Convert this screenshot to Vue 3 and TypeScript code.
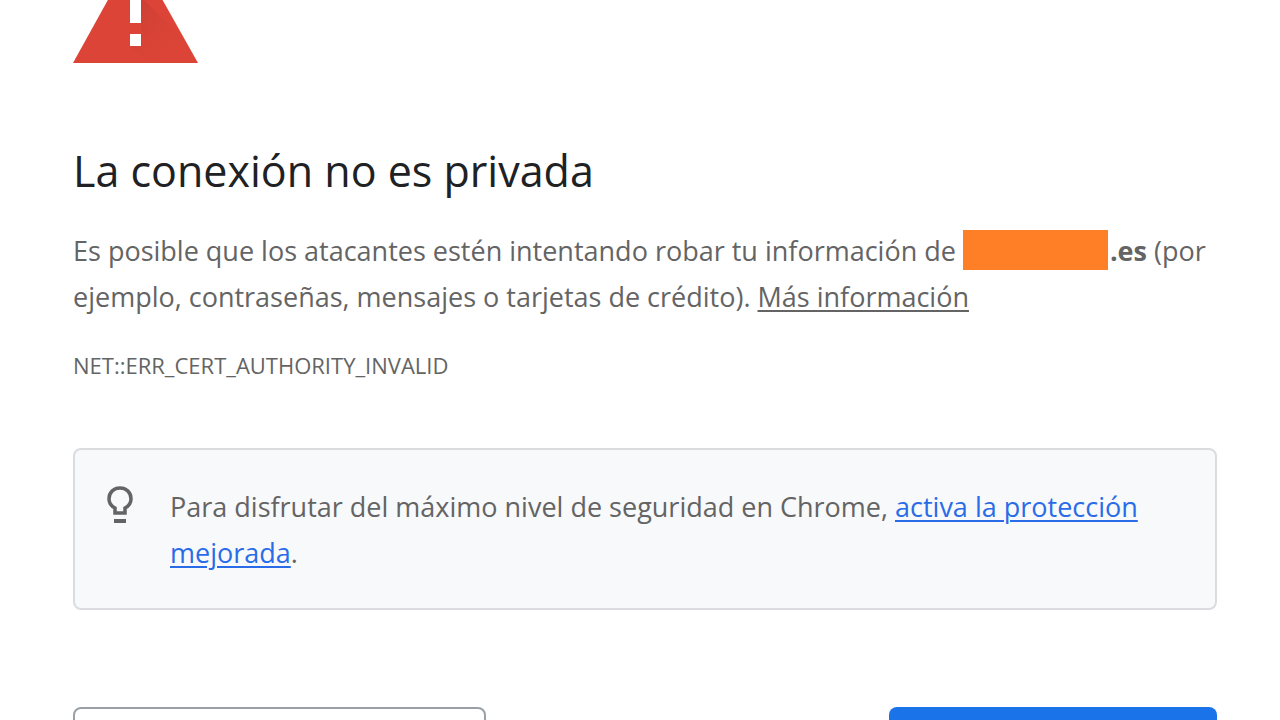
<script setup lang="ts">
const errorCode: string = 'NET::ERR_CERT_AUTHORITY_INVALID'
</script>

<template>
  <main class="page">
    <svg class="warning" viewBox="0 0 126 112" aria-hidden="true">
      <defs>
        <linearGradient id="shade" x1="0" y1="0" x2="1" y2="1">
          <stop offset="0" stop-color="#b93a30" stop-opacity=".6" />
          <stop offset="0.8" stop-color="#db4437" stop-opacity="0" />
        </linearGradient>
      </defs>
      <path d="M62 0L125 112H0Z" fill="#db4437" />
      <path d="M68 46L106 84L121 112H74L57 95L68 84Z" fill="url(#shade)" />
      <path d="M57 46H68V72H57ZM57 83H68V95H57Z" fill="#fff" />
    </svg>
    <h1>La conexión no es privada</h1>
    <p class="message">
      Es posible que los atacantes estén intentando robar tu información de
      <span class="redaction"></span><strong>.es</strong> (por ejemplo, contraseñas, mensajes o tarjetas de crédito).
      <a href="#info">Más información</a>
    </p>
    <p class="code">{{ errorCode }}</p>
    <section class="tip">
      <svg class="bulb" viewBox="0 0 28 38" aria-hidden="true">
        <path d="M9 27V22C5 20 3 17 3 13C3 6 8 2 14 2S25 6 25 13C25 17 23 20 19 22V27Z" fill="none" stroke="#646464" stroke-width="3.5" />
        <path d="M8 33H20V37H8Z" fill="#646464" />
      </svg>
      <p>Para disfrutar del máximo nivel de seguridad en Chrome, <a href="#protection">activa la protección mejorada</a>.</p>
    </section>
    <div class="actions">
      <button class="secondary" type="button" aria-label="Configuración avanzada"></button>
      <button class="primary" type="button" aria-label="Volver para estar a salvo"></button>
    </div>
  </main>
</template>

<style>
body { margin: 0; background: #fff; }
</style>

<style scoped>
.page { box-sizing: border-box; height: 100vh; overflow: hidden; padding: 0 63px 0 73px; color: #646464; font: 27px/46px "Open Sans", "Noto Sans", sans-serif; }
.warning { display: block; width: 126px; height: 112px; margin-top: -49px; }
h1 { margin: 78px 0 0; color: #202124; font-size: 43px; line-height: 60px; font-weight: 400; }
p { margin: 0; }
.message { margin-top: 27px; }
.message a { color: #646464; }
a { text-decoration-thickness: 2px; text-underline-offset: 3px; }
.redaction { display: inline-block; width: 145px; height: 40px; margin-right: 2px; background: #ff7f27; vertical-align: -9px; }
.code { margin-top: 27px; font-size: 22px; line-height: 36px; }
.tip { box-sizing: border-box; display: flex; gap: 36px; margin-top: 65px; padding: 34px 60px 32px 31px; border: 2px solid #dadce0; border-radius: 8px; background: #f8f9fb; }
.tip a { color: #2a6ce8; }
.bulb { flex: none; width: 28px; height: 38px; margin-top: 2px; }
.actions { display: flex; justify-content: space-between; margin-top: 97px; }
button { height: 70px; border-radius: 8px; }
.secondary { width: 413px; border: 2px solid #9aa0a6; background: #fff; }
.primary { width: 328px; border: 0; background: #1a73e8; }
</style>
